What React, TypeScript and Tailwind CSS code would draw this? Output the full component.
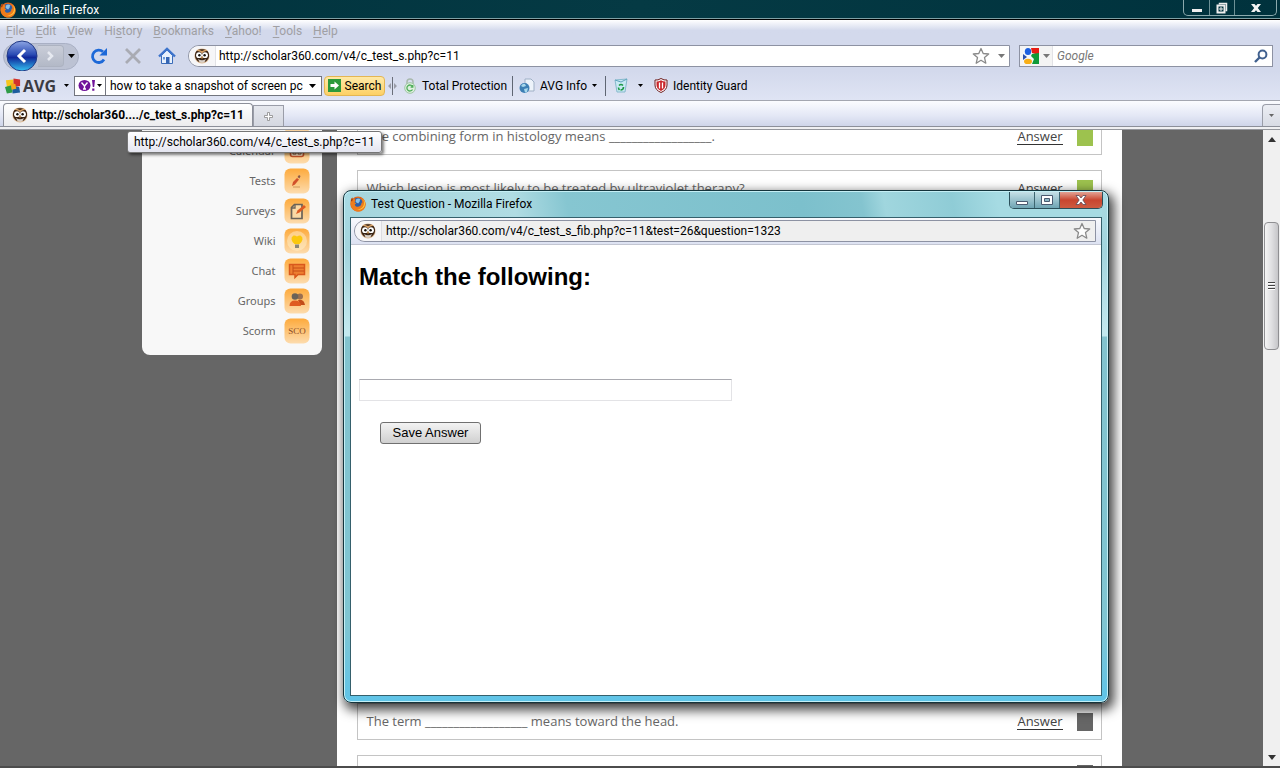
import type { ReactNode } from "react";

function FirefoxIcon() {
  return (
    <svg viewBox="0 0 16 16" className="size-4 shrink-0" aria-hidden="true">
      <circle cx="8" cy="8" r="7.6" fill="#e0651a" />
      <circle cx="7.6" cy="7" r="5" fill="#2b5fa8" />
      <path d="M6 3.4c1.5-1.4 3.6-1 4.8.2-1 0-1.4.6-.8 1.4L8.2 7.4 5.6 6z" fill="#86c2e8" />
      <path d="M.6 8C.2 4.600 1 2.600 2.200 1.600l.6 1.800C4 2.800 5.200 3 5.600 4L4.600 6.200l1.600 1.200-1.400 1c.2 2.200 3.200 3 5.200 1.600 1-.8 1.600-2 1.400-3.600l1 .8c.2-2.400-.4-4-1.800-5.400 3 1 5 3.600 5 6.600 0 4.200-3.400 7.200-7.400 7.200S1 12 .6 8z" fill="#ee7d1c" />
      <path d="M12.600 2.800c1.600 2 2 4.600.8 7-1.200 2.600-4 4-7 3.200 3 1.400 6.400.6 8-2.400 1.200-2.600.8-5.800-1.800-7.800z" fill="#ffc63c" />
      <path d="M1 5c.2-1.600.6-2.600 1.200-3.400l.6 1.800L2 5.600z" fill="#a03a10" />
    </svg>
  );
}

function OwlIcon() {
  return (
    <svg viewBox="0 0 16 16" className="size-4 shrink-0" aria-hidden="true">
      <circle cx="8" cy="8" r="7.6" fill="#dcb892" />
      <path d="M1 6.500C1.500 2.500 4.500 1.200 8 1.200s6.500 1.300 7 5.300c.3 3.500-1.500 6-3.500 7.200h-7C2.500 12.500.7 10 1 6.500z" fill="#3a2415" />
      <path d="M2.500 2.500 6.500 4 8 5.500 9.500 4l4-1.500L12 1.500 8 3 4 1.500z" fill="#d9a368" />
      <circle cx="5" cy="7.200" r="2.900" fill="#fff" />
      <circle cx="11" cy="7.200" r="2.900" fill="#fff" />
      <circle cx="5.400" cy="7.200" r="1.200" fill="#15100c" />
      <circle cx="10.600" cy="7.200" r="1.200" fill="#15100c" />
      <path d="M7 8.800h2L8 11.200z" fill="#f0b060" />
      <path d="M4 11q4 2.500 8 0l-1.500 3q-2.500 1.500-5 0z" fill="#d8d0c8" />
    </svg>
  );
}

function Caret({ gray = false }: { gray?: boolean }) {
  return (
    <svg viewBox="0 0 7 4" className="h-1 w-[7px] shrink-0" aria-hidden="true">
      <path d="M0 0h7L3.500 4z" fill={gray ? "#777" : "#000"} />
    </svg>
  );
}

function SmallCaret({ gray = false }: { gray?: boolean }) {
  return (
    <svg viewBox="0 0 5 3" className="h-[3px] w-[5px] shrink-0" aria-hidden="true">
      <path d="M0 0h5L2.500 3z" fill={gray ? "#666" : "#000"} />
    </svg>
  );
}

function StarIcon() {
  return (
    <svg viewBox="0 0 18 18" className="size-[18px] shrink-0" aria-hidden="true">
      <path d="M9 1.500l2.200 5 5.500.5-4.200 3.600 1.300 5.600L9 13.300l-4.800 2.900 1.300-5.600L1.300 7l5.500-.5z" fill="#fdfdfd" stroke="#8a8a8a" strokeWidth="1.300" strokeLinejoin="round" />
    </svg>
  );
}

const menus: [string, string, string][] = [
  ["", "F", "ile"],
  ["", "E", "dit"],
  ["", "V", "iew"],
  ["Hi", "s", "tory"],
  ["", "B", "ookmarks"],
  ["", "Y", "ahoo!"],
  ["", "T", "ools"],
  ["", "H", "elp"],
];

function TitleBar() {
  return (
    <header className="flex h-5 shrink-0 items-start justify-between border-b border-black bg-gradient-to-r from-[#00323d] via-[#053a44] to-[#00323d] shadow-[inset_0_-1px_0_#7fa0a4]">
      <div className="flex items-center gap-[5px] pt-px text-xs leading-[18px] text-white">
        <FirefoxIcon />
        <span>Mozilla Firefox</span>
      </div>
      <div className="mr-[3px] flex h-4 rounded-b-[5px] border border-t-0 border-[#8ba9ad] text-white">
        <button aria-label="Minimize" className="flex w-[26px] items-center justify-center border-r border-[#6d9196]">
          <svg viewBox="0 0 12 12" className="size-3"><path d="M1 7h10v3H1z" fill="#eee" /></svg>
        </button>
        <button aria-label="Restore" className="flex w-[25px] items-center justify-center border-r border-[#6d9196]">
          <svg viewBox="0 0 12 12" className="size-3" fill="none" stroke="#eee" strokeWidth="1.500">
            <path d="M3.500 2.500v-1h7v7h-1" />
            <path d="M1.500 3.500h7v7h-7z" strokeWidth="2" />
            <path d="M4 6h2v2H4z" strokeWidth="1" />
          </svg>
        </button>
        <button aria-label="Close" className="flex w-[41px] items-center justify-center">
          <svg viewBox="0 0 12 12" className="size-3"><path d="M1 2h3.500L6 3.800 7.500 2H11L7.800 6 11 10H7.500L6 8.200 4.500 10H1l3.200-4z" fill="#f4f4f4" /></svg>
        </button>
      </div>
    </header>
  );
}

function MenuBar() {
  return (
    <nav className="flex h-[21px] shrink-0 gap-[11px] bg-gradient-to-b from-white to-[#d3d9ec] to-50% pl-[6px] text-xs leading-5 text-[#a0a0a4]">
      {menus.map(([before, key, after]) => (
        <button key={key + after} className="whitespace-nowrap">
          {before}
          <span className="underline underline-offset-2">{key}</span>
          {after}
        </button>
      ))}
    </nav>
  );
}

function NavBar() {
  return (
    <div className="flex h-[30px] shrink-0 items-center bg-[#d3d9ec] pr-[7px] pl-[3px]">
      <div className="flex h-[27px] w-[76px] shrink-0 items-center rounded-full border border-[#a9b0c4] bg-[#bcc2d3]">
        <button aria-label="Back" className="shrink-0">
          <svg viewBox="0 0 34 32" className="-my-1 h-8 w-[34px]">
            <defs>
              <linearGradient id="back" x1="0" y1="0" x2="0" y2="1">
                <stop offset="0" stopColor="#8ea6e4" />
                <stop offset=".45" stopColor="#2a4bb4" />
                <stop offset=".55" stopColor="#10289a" />
                <stop offset="1" stopColor="#35c3f2" />
              </linearGradient>
            </defs>
            <circle cx="18" cy="16" r="15" fill="url(#back)" stroke="#223a86" />
            <path d="M21 10l-6 6 6 6" fill="none" stroke="#fff" strokeWidth="3" />
          </svg>
        </button>
        <button aria-label="Forward" className="flex h-[22px] w-[26px] items-center justify-center rounded-r border border-l-0 border-[#adb3c1] bg-gradient-to-b from-[#c9cdd8] to-[#b3b9c7]">
          <svg viewBox="0 0 10 12" className="h-3 w-[10px]"><path d="M2 2l4 4-4 4" fill="none" stroke="#e6e9f0" strokeWidth="2.500" /></svg>
        </button>
        <button aria-label="Recent pages" className="ml-1"><Caret /></button>
      </div>
      <button aria-label="Reload" className="ml-[11px]">
        <svg viewBox="0 0 18 18" className="size-[18px]">
          <path d="M14 12.500A6.200 6.200 0 1 1 13 4.800" fill="none" stroke="#1d69d8" strokeWidth="2.800" />
          <path d="M17 1v7.500H9.500z" fill="#1d69d8" />
        </svg>
      </button>
      <button aria-label="Stop" className="ml-4">
        <svg viewBox="0 0 18 18" className="size-[18px]"><path d="M2 2l14 14M16 2L2 16" stroke="#a9abb3" strokeWidth="2.800" /></svg>
      </button>
      <button aria-label="Home" className="ml-4">
        <svg viewBox="0 0 18 18" className="size-[18px]">
          <path d="M3.500 8.500v8h11v-8L9 3z" fill="#e8f1fc" stroke="#3b6cb8" />
          <path d="M1 9.500L9 1.800l8 7.700" fill="none" stroke="#3d74cc" strokeWidth="2.400" />
          <path d="M8 10h3.500v6.500H8z" fill="#3566b4" />
          <path d="M5 10h2v2.500H5z" fill="#6a9bdc" />
        </svg>
      </button>
      <div className="ml-3 flex h-[22px] min-w-0 flex-1 items-center rounded-l-full border border-[#8d92a3] bg-white pr-1">
        <div className="flex h-5 w-[27px] shrink-0 items-center justify-center rounded-l-full border-r border-[#e2e2e6] bg-[#f6f6f8]"><OwlIcon /></div>
        <input aria-label="Location" defaultValue="http://scholar360.com/v4/c_test_s.php?c=11" className="min-w-0 flex-1 bg-transparent pl-[3px] text-xs leading-5 text-black outline-none" />
        <button aria-label="Bookmark this page" className="mr-2"><StarIcon /></button>
        <button aria-label="Show history"><Caret gray /></button>
      </div>
      <div className="ml-[9px] flex h-[22px] w-[254px] items-center border border-[#8d92a3] bg-white pr-1">
        <button aria-label="Search engine" className="flex h-5 w-[33px] shrink-0 items-center gap-1 border-r border-[#e2e2e6] bg-[#f4f4f4] pl-[3px]">
          <svg viewBox="0 0 16 16" className="size-4">
            <path d="M0 0h16v16H0z" fill="#f4f7fb" />
            <path d="M8 0h8v7L9 5z" fill="#e81c14" />
            <path d="M9 6l7-1v11H9l2-5-3-3z" fill="#0f9a38" />
            <ellipse cx="5" cy="3.500" rx="3.200" ry="3.500" fill="#1c5fe0" />
            <ellipse cx="5" cy="13.500" rx="4" ry="2.800" fill="#f8ae16" />
            <path d="M0 6l4 3-4 3z" fill="#2a4fae" />
          </svg>
          <Caret gray />
        </button>
        <input aria-label="Search" placeholder="Google" className="min-w-0 flex-1 bg-transparent pl-[4px] text-xs leading-5 outline-none placeholder:text-[#777] placeholder:italic" />
        <button aria-label="Search the web">
          <svg viewBox="0 0 14 14" className="size-[14px]" fill="none" stroke="#41618f">
            <circle cx="8.500" cy="5.500" r="3.900" strokeWidth="2" />
            <path d="M5.500 8.500L1 13" strokeWidth="2.400" />
          </svg>
        </button>
      </div>
    </div>
  );
}

function AvgBar() {
  return (
    <div className="flex h-[30px] shrink-0 items-center border-b border-[#a3a6b0] bg-gradient-to-b from-[#d3d9ec] to-[#dfe4f4] pl-[5px] text-xs text-black">
      <button className="flex w-[51px] items-center gap-px">
        <svg viewBox="0 0 18 18" className="size-[18px]">
          <path d="M1 3l8-1v7l-7 1z" fill="#f6c51c" />
          <path d="M9 1l7 1v7l-7 1z" fill="#d3312b" />
          <path d="M0 10l8-2v8l-6 1z" fill="#2f9b47" />
          <path d="M8 9l7 1 1 6-8 1z" fill="#1d5d9e" />
          <path d="M6 6l5 1 1 5-5 1z" fill="#f3a51c" />
        </svg>
        <span className="font-['Open_Sans'] text-base leading-5 font-bold text-[#3b3b41]">AVG</span>
      </button>
      <button aria-label="AVG menu" className="ml-2"><SmallCaret /></button>
      <div className="ml-[5px] flex h-5 w-[248px] shrink-0 items-center border border-[#72757e] bg-white">
        <button aria-label="Yahoo" className="flex h-[18px] w-[31px] shrink-0 items-center justify-center gap-px border-r border-[#72757e]">
          <svg viewBox="0 0 18 13" className="h-[13px] w-[18px]">
            <ellipse cx="6.500" cy="6.500" rx="6" ry="5.500" fill="#70149a" />
            <path d="M3.500 3.500l3 3.500 3-3.500M6.500 7v3M5 10h3" stroke="#fff" strokeWidth="1.400" fill="none" />
            <path d="M14 1h3l-.8 7h-1.400zM14.200 9.500h2.200v2.200h-2.200z" fill="#70149a" />
          </svg>
          <SmallCaret />
        </button>
        <input aria-label="Yahoo search" defaultValue="how to take a snapshot of screen pc" className="min-w-0 flex-1 bg-transparent pl-1 text-xs leading-[18px] outline-none" />
        <button aria-label="Search history" className="mr-[5px] ml-1"><Caret /></button>
      </div>
      <button className="ml-[2px] flex h-5 w-[61px] shrink-0 items-center justify-center gap-1 rounded border border-[#e4b653] bg-gradient-to-b from-[#ffe9a6] to-[#fdd065]">
        <svg viewBox="0 0 13 13" className="size-[13px]">
          <path d="M0 0h13v13H0z" fill="#2c9a3c" />
          <path d="M2.500 5h4V2.500l4.500 4-4.500 4V8h-4z" fill="#fff" />
        </svg>
        Search
      </button>
      <svg viewBox="0 0 9 18" className="ml-[3px] h-[18px] w-[9px] shrink-0">
        <path d="M4.500 0v18" stroke="#6b6f7a" />
        <path d="M0 9l3-3v6zM9 9L6 6v6z" fill="#9a9da8" />
      </svg>
      <button className="ml-[6px] flex items-center gap-[5px] whitespace-nowrap">
        <svg viewBox="0 0 14 16" className="h-4 w-[14px]" fill="none">
          <path d="M4 7V4a3 3 0 0 1 6 0v3" stroke="#a9b9ae" strokeWidth="1.500" />
          <circle cx="7" cy="10" r="5.300" fill="#dff0df" stroke="#9fc7a4" />
          <path d="M9.500 8.500a3 3 0 1 0 0 3M9.800 7v2.200H7.600" stroke="#4fae5b" strokeWidth="1.300" />
        </svg>
        Total Protection
      </button>
      <div className="mr-[6px] ml-[5px] h-5 w-px bg-[#5f6673]" />
      <button className="flex items-center gap-[5px] whitespace-nowrap">
        <svg viewBox="0 0 16 16" className="size-4">
          <path d="M6 1h6l3 3v9H6z" fill="#edf3fa" stroke="#9fb0c6" />
          <circle cx="5.500" cy="10" r="5" fill="#3d7fb4" />
          <path d="M2 8q2-3 4-2l1 2-3 1zM5 11l4-1-1 4-2 .5z" fill="#a7d8ec" />
        </svg>
        AVG Info
        <SmallCaret />
      </button>
      <div className="mr-[8px] ml-2 h-5 w-px bg-[#5f6673]" />
      <button aria-label="Recycle" className="flex items-center gap-[10px]">
        <svg viewBox="0 0 14 15" className="h-[15px] w-[14px]">
          <path d="M1 2l12-1-2 13H3z" fill="#c9e9f4" stroke="#86b9cc" />
          <path d="M1 2l6 2 6-3" fill="none" stroke="#5fa4bd" />
          <path d="M5 7.500q2-2 4 0M9.500 9q0 3-3 3M4.500 9.500q0 1.500 1 2.500" fill="none" stroke="#1c9a46" strokeWidth="1.600" />
        </svg>
        <SmallCaret />
      </button>
      <button className="ml-[11px] flex items-center gap-[5px] whitespace-nowrap">
        <svg viewBox="0 0 14 15" className="h-[15px] w-[14px]">
          <path d="M1 2q3 .5 6-1.500Q10 2.500 13 2v5q0 5-6 7.500Q1 12 1 7z" fill="#fff" stroke="#6e1c1c" />
          <path d="M2.500 3.500Q5 3.600 7 2.200q2 1.400 4.500 1.300V7q0 3.800-4.500 6-4.500-2.200-4.500-6z" fill="#c9252b" />
          <path d="M5.500 4.500v6M8.500 4.500v6" stroke="#fff" strokeWidth="1.300" />
        </svg>
        Identity Guard
      </button>
    </div>
  );
}

function TabBar() {
  return (
    <div className="flex h-[29px] shrink-0 flex-col">
      <div className="flex h-[26px] items-end border-b border-[#8c8f99] bg-gradient-to-b from-[#fbfcff] via-[#e3e7f5] via-60% to-[#cfd5e9] pl-[3px]">
        <button className="flex h-[23px] w-[250px] shrink-0 items-center gap-1 rounded-t border border-b-0 border-[#8c8f99] bg-gradient-to-b from-white to-[#ececee] pl-2 text-xs font-bold whitespace-nowrap text-black">
          <OwlIcon />
          http://scholar360..../c_test_s.php?c=11
        </button>
        <button aria-label="New tab" className="flex h-[21px] w-[31px] items-center justify-center border border-b-0 border-[#9a9da8] bg-gradient-to-b from-[#e6e8ee] to-[#d4d7e0]">
          <svg viewBox="0 0 9 9" className="size-[9px]"><path d="M3.500 0.500h2v3h3v2h-3v3h-2v-3h-3v-2h3z" fill="#fff" stroke="#888" strokeWidth=".8" /></svg>
        </button>
        <button aria-label="List all tabs" className="ml-auto flex h-[22px] w-[18px] items-center justify-center rounded-tl border border-r-0 border-b-0 border-[#9a9da8] bg-gradient-to-b from-[#eceef4] to-[#d8dbe4]">
          <SmallCaret gray />
        </button>
      </div>
      <div className="h-[3px] border-b border-[#94969c] bg-[#f0f0f2]" />
    </div>
  );
}

const sidebar: { label: string; art: ReactNode }[] = [
  { label: "", art: null },
  {
    label: "Calendar",
    art: (
      <>
        <rect x="6.500" y="5.500" width="13" height="13" rx="2" fill="#fbe3c4" stroke="#c4532a" strokeWidth="1.600" />
        <path d="M7 8h12" stroke="#c4532a" strokeWidth="3" />
        <path d="M9 13h3v3H9zM14 13h3v3h-3z" fill="none" stroke="#7b4a35" />
      </>
    ),
  },
  {
    label: "Tests",
    art: (
      <>
        <path d="M8 18l1-4 4-4 2 1.500-4 5z" fill="#d2502a" />
        <path d="M13.500 9l1.500-2 1.500 1-1 2.500z" fill="#8a5a48" />
        <path d="M9 19h7" stroke="#d9a468" strokeWidth="1.300" />
      </>
    ),
  },
  {
    label: "Surveys",
    art: (
      <>
        <path d="M10.500 6.500H18v14H7.500v-11z" fill="#fbd9a4" stroke="#6a6258" strokeWidth="1.700" />
        <path d="M7.500 10h3.500V6.500" fill="none" stroke="#6a6258" strokeWidth="1.300" />
        <path d="M12 16l1.500-3.500L20 7l2 2-6.500 5.500z" fill="#dd5a22" />
      </>
    ),
  },
  {
    label: "Wiki",
    art: (
      <>
        <circle cx="13" cy="13" r="10" fill="#fff3d2" opacity=".45" />
        <path d="M9.500 7.500q1.500-.5 3.500 1 2-1.500 3.500-1 2.500 1.300 2 4-.5 2.500-3 4.500h-5q-2.500-2-3-4.500-.5-2.700 2-4z" fill="#fbc80e" />
        <path d="M11 16.500h4v3.500h-4z" fill="#8b8777" />
      </>
    ),
  },
  {
    label: "Chat",
    art: (
      <>
        <path d="M5.500 6.500h15v10H14l-3 3v-3H5.500z" fill="#ee8030" stroke="#d9581c" strokeWidth="1.500" />
        <path d="M9 7v9M9 10h11M9 13h11" stroke="#c64c16" />
      </>
    ),
  },
  {
    label: "Groups",
    art: (
      <>
        <circle cx="16" cy="8.500" r="3" fill="#9b7050" />
        <path d="M14 12q6-1 7 5h-5z" fill="#c24c1a" />
        <circle cx="11" cy="8.500" r="3.300" fill="#6b6258" />
        <path d="M5.500 18q0-5.500 5.500-5.500t6 5.500z" fill="#df5a20" />
      </>
    ),
  },
  {
    label: "Scorm",
    art: (
      <text x="13" y="16" textAnchor="middle" fontSize="9" fill="#8c4a22" className="font-['Liberation_Serif',serif]">
        SCO
      </text>
    ),
  },
];

function Sidebar() {
  return (
    <aside className="-mt-6 w-[180px] shrink-0 self-start rounded-b-lg bg-[#f8f8f8] pb-[9px]">
      <ul>
        {sidebar.map(({ label, art }) => (
          <li key={label}>
            <a href="#" className="flex h-[30px] items-center justify-end gap-2 pr-3 font-['Noto_Sans',sans-serif] text-[11px] text-[#666]">
              <span>{label}</span>
              <svg viewBox="0 0 26 26" className="size-[26px]" aria-hidden="true">
                <defs>
                  <linearGradient id="tile" x1="0" y1="0" x2="0" y2="1">
                    <stop offset="0" stopColor="#fdaa3c" />
                    <stop offset="1" stopColor="#fddcae" />
                  </linearGradient>
                </defs>
                <rect x=".5" y=".5" width="25" height="25" rx="6" fill="url(#tile)" />
                {art}
              </svg>
            </a>
          </li>
        ))}
      </ul>
    </aside>
  );
}

function Question({ text, answered = false }: { text?: string; answered?: boolean }) {
  return (
    <li className="flex h-[37px] shrink-0 items-center justify-end border border-[#c4c4c4] pr-2 pl-[9px] font-['Open_Sans',sans-serif] text-[13px] text-[#666]">
      {text && (
        <>
          <span className="whitespace-nowrap">{text}</span>
          <a href="#" className="ml-auto border-b border-[#333] leading-[15px] text-[#444]">
            Answer
          </a>
        </>
      )}
      <span className={answered ? "ml-[14px] h-[18px] w-4 bg-[#9dc24e]" : "ml-[14px] h-[18px] w-4 bg-[#666]"} />
    </li>
  );
}

function Questions() {
  return (
    <main className="min-w-0 flex-1 bg-white px-5">
      <ul className="-mt-3 flex flex-col gap-[15px]">
        <Question text="The combining form in histology means __________________." answered />
        <Question text="Which lesion is most likely to be treated by ultraviolet therapy?" answered />
        <li className="h-[466px] shrink-0" />
        <Question text="The term __________________ means toward the head." />
        <Question />
      </ul>
    </main>
  );
}

function Scrollbar() {
  return (
    <div className="flex w-[17px] shrink-0 flex-col items-center bg-[#f0f0f0] py-[6px]">
      <svg viewBox="0 0 8 5" className="mt-px h-[5px] w-2"><path d="M0 5h8L4 0z" fill="#333" /></svg>
      <div className="mt-20 flex h-32 w-[15px] flex-col items-center justify-center gap-px rounded-sm border border-[#8f8f92] bg-gradient-to-r from-[#f5f5f5] via-[#e0e0e2] to-[#c6c6c9]">
        <span className="h-[2px] w-[7px] border-t border-[#444] bg-white" />
        <span className="h-[2px] w-[7px] border-t border-[#444] bg-white" />
        <span className="h-[2px] w-[7px] border-t border-[#444] bg-white" />
      </div>
      <svg viewBox="0 0 8 5" className="mt-auto h-[5px] w-2"><path d="M0 0h8L4 5z" fill="#333" /></svg>
    </div>
  );
}

function Popup() {
  return (
    <section
      aria-label="Test Question"
      className="absolute top-[190px] left-[343px] flex h-[513px] w-[766px] flex-col rounded-lg border border-[#14343c] bg-[linear-gradient(#a9dbe4_0px,#a3d4dd_60px,#c3e8ee_140px,#c3e8ee_145px,#83c3ce_146px,#7fc5d2_85%,#5fc4e8_100%)] px-[6px] pb-[6px] shadow-[3px_5px_12px_2px_rgba(0,0,0,0.75),inset_0_0_0_1px_#c5eff5]"
    >
      <div className="mt-px flex h-[25px] shrink-0 items-start justify-between bg-[linear-gradient(80deg,#a5d5dd_0%,#b0dce3_22%,#86c6d1_29%,#7cc0cc_60%,#84c4cf_68%,#a0d6de_71%,#8fccd6_80%,#a6dbe3_86%)] text-xs leading-6 text-black">
        <div className="flex items-center gap-[5px]">
          <FirefoxIcon />
          <span>Test Question - Mozilla Firefox</span>
        </div>
        <div className="-mr-px flex h-[17px] overflow-hidden rounded-b-[5px] border border-t-0 border-[#2b4f5a]">
          <button aria-label="Minimize popup" className="flex w-[25px] items-center justify-center border-r border-[#3d6570] bg-gradient-to-b from-[#c5e0e6] to-[#6fa5b4]">
            <svg viewBox="0 0 12 12" className="size-3"><path d="M.5 7.500h11v3H.5z" fill="#fff" stroke="#4a5a70" /></svg>
          </button>
          <button aria-label="Maximize popup" className="flex w-[25px] items-center justify-center border-r border-[#3d6570] bg-gradient-to-b from-[#c5e0e6] to-[#6fa5b4]">
            <svg viewBox="0 0 12 12" className="size-3">
              <path d="M.5 1.500h11v9H.5z" fill="#fff" stroke="#4a5a70" />
              <path d="M3.500 4.500h5v3h-5z" fill="#8fb9c6" stroke="#4a5a70" />
            </svg>
          </button>
          <button aria-label="Close popup" className="flex w-[42px] items-center justify-center bg-gradient-to-b from-[#e2a294] via-[#c8452f] to-[#cc5a40]">
            <svg viewBox="0 0 12 12" className="size-3"><path d="M1 1.500h3L6 4l2-2.500h3L7.800 6l3.200 4.500H8L6 8l-2 2.500H1L4.200 6z" fill="#fff" stroke="#5a4a58" strokeWidth=".8" /></svg>
          </button>
        </div>
      </div>
      <div className="flex min-h-0 flex-1 flex-col border border-[#35606c] bg-white">
        <div className="flex h-[27px] shrink-0 items-center border-b border-[#c3c6d2] bg-gradient-to-b from-[#f8f9fd] to-[#dde2f2] pr-[5px] pl-[3px]">
          <div className="flex h-[22px] min-w-0 flex-1 items-center rounded-l-full border border-[#8d92a3] bg-[#efefef] pr-1">
            <div className="flex h-5 w-[27px] shrink-0 items-center justify-center rounded-l-full border-r border-[#dcdce0] bg-[#f6f6f8]"><OwlIcon /></div>
            <input aria-label="Popup location" readOnly value="http://scholar360.com/v4/c_test_s_fib.php?c=11&test=26&question=1323" className="min-w-0 flex-1 bg-transparent pl-1 text-xs leading-5 text-black outline-none" />
            <button aria-label="Bookmark popup"><StarIcon /></button>
          </div>
        </div>
        <form className="px-2 pt-4 font-['Liberation_Sans',sans-serif]">
          <h1 className="text-2xl leading-8 font-bold text-black">Match the following:</h1>
          <input aria-label="Answer" className="mt-[86px] block h-[22px] w-[373px] border border-[#e3e3e6] border-t-[#a9aab0] px-1 text-[13px] outline-none" />
          <button type="button" className="mt-[21px] ml-[21px] h-[22px] w-[101px] rounded-[3px] border border-[#707070] bg-gradient-to-b from-[#f3f3f3] to-[#d0d0d0] text-[13px] leading-5 text-black">
            Save Answer
          </button>
        </form>
      </div>
    </section>
  );
}

export default function App() {
  return (
    <div className="relative flex h-screen flex-col overflow-hidden font-['Roboto',sans-serif]">
      <TitleBar />
      <MenuBar />
      <NavBar />
      <AvgBar />
      <TabBar />
      <div className="flex min-h-0 flex-1 overflow-hidden border-b-2 border-[#4c4c4c]">
        <div className="flex min-w-0 flex-1 justify-center overflow-hidden bg-[#666]">
          <div className="flex w-[980px] shrink-0 gap-[15px]">
            <Sidebar />
            <Questions />
          </div>
        </div>
        <Scrollbar />
      </div>
      <Popup />
      <div role="tooltip" className="absolute top-[131px] left-[127px] rounded-[3px] border border-[#767676] bg-gradient-to-b from-white to-[#e4e5f0] px-[6px] text-xs leading-5 text-black shadow-[2px_2px_3px_rgba(0,0,0,0.5)]">
        http://scholar360.com/v4/c_test_s.php?c=11
      </div>
    </div>
  );
}
